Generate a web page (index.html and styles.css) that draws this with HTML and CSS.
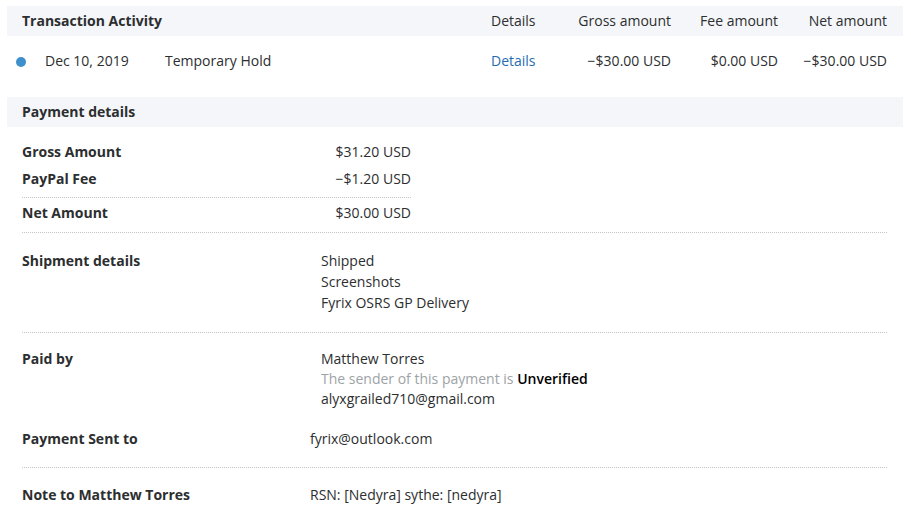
FILE: index.html
```html
<!DOCTYPE html>
<html>
<head>
<meta charset="utf-8">
<link rel="stylesheet" href="styles.css">
</head>
<body>
<div class="page">
  <div class="bar grid">
    <div class="title">Transaction Activity</div>
    <div class="col">Details</div>
    <div class="col num">Gross amount</div>
    <div class="col num">Fee amount</div>
    <div class="col num">Net amount</div>
  </div>
  <div class="row grid">
    <div class="main"><span class="dot"></span><span class="date">Dec 10, 2019</span><span class="desc">Temporary Hold</span></div>
    <div class="col link">Details</div>
    <div class="col num">&minus;$30.00 USD</div>
    <div class="col num">$0.00 USD</div>
    <div class="col num">&minus;$30.00 USD</div>
  </div>
  <div class="bar">
    <div class="title">Payment details</div>
  </div>
  <div class="details">
    <div class="amounts">
      <div class="arow first"><span class="label">Gross Amount</span><span>$31.20 USD</span></div>
      <div class="arow sep"><span class="label">PayPal Fee</span><span>&minus;$1.20 USD</span></div>
    </div>
    <div class="section netwrap">
      <div class="arow net"><span class="label">Net Amount</span><span>$30.00 USD</span></div>
    </div>
    <div class="section ship">
      <div class="label">Shipment details</div>
      <div class="val wide">Shipped<br>Screenshots<br>Fyrix OSRS GP Delivery</div>
    </div>
    <div class="section paid">
      <div class="pair">
        <div class="label">Paid by</div>
        <div class="val wide">Matthew Torres<br><span class="muted">The sender of this payment is <b>Unverified</b></span><br>alyxgrailed710@gmail.com</div>
      </div>
      <div class="pair sent">
        <div class="label">Payment Sent to</div>
        <div class="val narrow">fyrix@outlook.com</div>
      </div>
    </div>
    <div class="section note">
      <div class="label">Note to Matthew Torres</div>
      <div class="val narrow">RSN: [Nedyra] sythe: [nedyra]</div>
    </div>
  </div>
</div>
</body>
</html>
```
FILE: styles.css
```css
html, body {
  margin: 0;
  padding: 0;
  background: #ffffff;
}
body {
  font-family: "Open Sans", "Noto Sans", sans-serif;
  font-size: 14px;
  color: #2c2e2f;
}
.page {
  width: 896px;
  margin-left: 7px;
  padding-top: 6px;
}
.bar {
  background: #f5f6fa;
  height: 30px;
  line-height: 30px;
  padding: 0 16px 0 15px;
}
.title {
  font-weight: 700;
}
.grid {
  display: grid;
  grid-template-columns: 1fr 45px 135px 107px 109px;
}
.num {
  text-align: right;
}
.row {
  padding: 15px 16px 15px 15px;
  line-height: 20px;
  height: 31px;
}
.main {
  display: flex;
  align-items: center;
  height: 20px;
}
.dot {
  width: 10px;
  height: 10px;
  border-radius: 50%;
  background: #3f8fcc;
  margin-left: -6px;
  margin-right: 19px;
  margin-top: 2px;
}
.date {
  width: 120px;
}
.link {
  color: #1f6db2;
}
.details {
  padding: 0 16px 0 15px;
  line-height: 20px;
}
.label {
  font-weight: 700;
}
.amounts {
  width: 389px;
  padding-top: 15px;
}
.arow {
  display: flex;
  justify-content: space-between;
}
.arow.first {
  margin-bottom: 7px;
}
.arow.sep {
  padding-bottom: 8px;
  border-bottom: 1px dotted #c4c4c4;
}
.netwrap {
  padding: 5px 0 9px;
}
.arow.net {
  width: 389px;
}
.section {
  border-bottom: 1px dotted #c4c4c4;
}
.section, .pair {
  display: flex;
}
.ship {
  line-height: 21px;
  padding: 17px 0 19px;
}
.paid {
  flex-direction: column;
  padding: 16px 0 18px;
}
.sent {
  margin-top: 20px;
}
.note {
  border-bottom: none;
  padding-top: 17px;
}
.section .label, .pair .label {
  width: 299px;
  flex: none;
}
.val.narrow {
  margin-left: -11px;
}
.muted {
  color: #9da3a6;
}
.muted b {
  color: #000;
  font-weight: 600;
}
```
